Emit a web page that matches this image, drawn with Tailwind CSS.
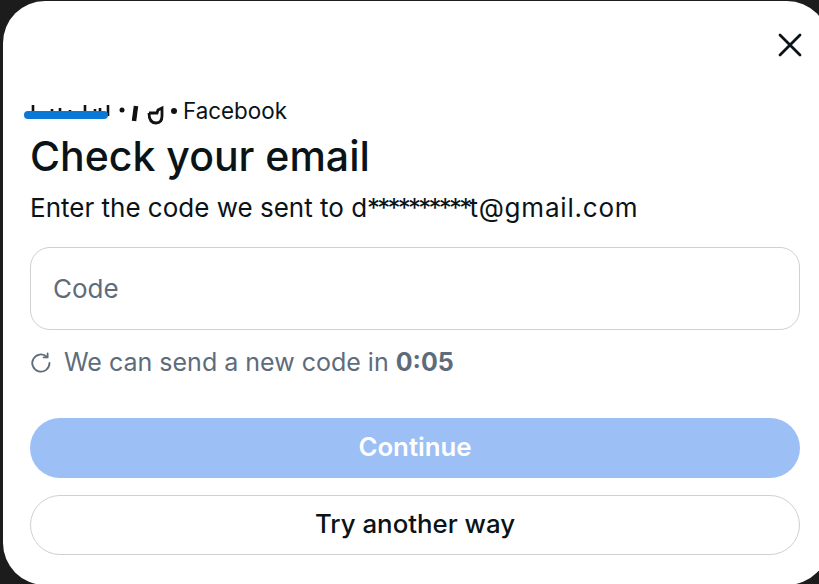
<!DOCTYPE html>
<html lang="en">
<head>
  <meta charset="UTF-8">
  <title>Check your email</title>
  <script src="https://cdn.jsdelivr.net/npm/@tailwindcss/browser@4"></script>
</head>
<body class="bg-[#1c1c1c] overflow-hidden font-['Inter','Liberation_Sans',sans-serif]">
  <div class="w-[819px] h-[584px] overflow-hidden pt-px pl-[3px]">
    <div class="w-[826px] h-[584px] bg-white rounded-[42px] pl-[27px] pr-[29px] flex flex-col">
      <div class="w-[770px] flex flex-col">
        <div class="h-[59px] flex justify-end items-end -mr-[3px]">
          <svg class="w-[26px] h-[26px] mb-[2px]" viewBox="0 0 26 26" fill="none" stroke="#0a1317" stroke-width="2.8" stroke-linecap="round"><path d="M3 3l20 20M23 3L3 23"/></svg>
        </div>
        <!-- account line, name is scribbled out -->
        <div class="relative h-[34px] mt-[34px] flex items-center text-[22.400px] leading-[34px] text-[#0a1317]">
          <svg class="absolute -left-[7px] top-[6px] w-[150px] h-[26px]" viewBox="0 0 150 26" fill="none">
            <path d="M10 12V5M29 12V9M37 12V8M47 12V10M62 12V5M72 12V9M77 12V8M85 16V5" stroke="#111" stroke-width="2.600"/>
            <path d="M113 6l-2 15" stroke="#111" stroke-width="4.500"/>
            <path d="M126 13c0 6 2 10 7 10s6-4 6-7V8l-4 2-1 3h-8" stroke="#111" stroke-width="2.800"/>
            <circle cx="99" cy="10" r="2.500" fill="#111"/>
            <rect x="1" y="11" width="84" height="8" rx="4" fill="#0a78d6"/>
          </svg>
          <span class="ml-[141px] flex items-center gap-[6px]"><span class="w-[6px] h-[6px] rounded-full bg-[#0a1317]"></span>Facebook</span>
        </div>
        <h1 class="mt-[3px] text-[41px] leading-[50px] font-[550] text-[#0a1317]">Check your email</h1>
        <p class="mt-[11px] text-[26px] leading-[32px] text-[#0a1317]">Enter the code we sent to d<span class="tracking-[-2.800px]">**********</span><span class="tracking-[0.800px]">t@gmail.com</span></p>
        <div class="mt-[23px] h-[83px] border border-[#ced0d4] rounded-[20px] flex items-center px-[22px] text-[26px] text-[#5d6c7b]">Code</div>
        <div class="mt-[16px] h-[34px] flex items-center gap-[12px] text-[25px] text-[#5d6c7b]">
          <svg class="w-[22px] h-[22px]" viewBox="0 0 22 22" fill="none" stroke="#5d6c7b" stroke-width="1.8" stroke-linecap="round" stroke-linejoin="round"><path d="M19.5 11a8.6 8.6 0 1 1-2.6-6.1"/><path d="M17.6 1.4v4h-4"/></svg>
          <span>We can send a new code in <b class="font-bold">0:05</b></span>
        </div>
        <button class="mt-[38px] h-[60px] pb-[2px] rounded-full bg-[#9cc0f5] text-white text-[25.800px] font-semibold">Continue</button>
        <button class="mt-[17px] h-[60px] pb-[2px] rounded-full border border-[#ced0d4] bg-white text-[#0a1317] text-[25.800px] font-medium">Try another way</button>
      </div>
    </div>
  </div>
</body>
</html>
